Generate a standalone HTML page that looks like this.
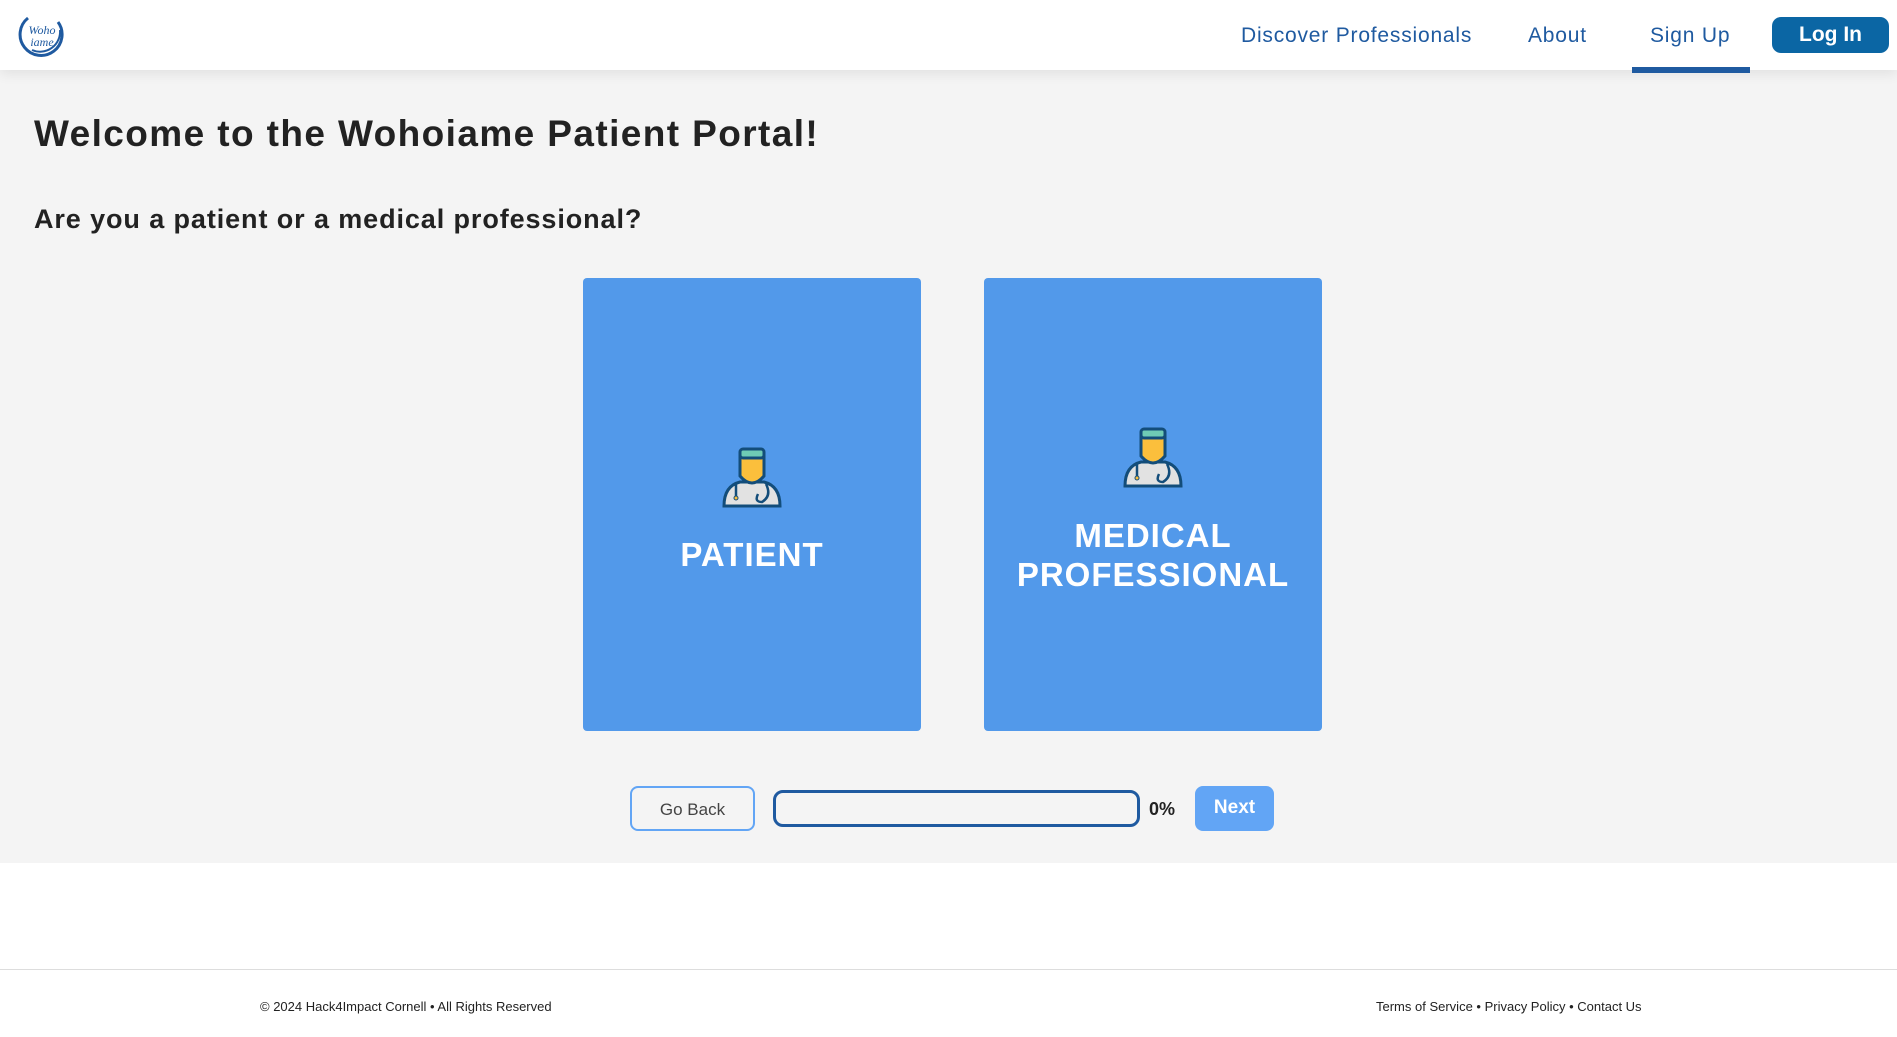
<!DOCTYPE html>
<html><head><meta charset="utf-8"><style>
*{box-sizing:border-box;margin:0;padding:0}
body{width:1897px;height:1037px;background:#fff;font-family:"Liberation Sans",sans-serif;position:relative;overflow:hidden}
.hdr{position:absolute;left:0;top:0;width:1897px;height:70px;background:#fff;box-shadow:0 4px 12px rgba(0,0,0,.08);z-index:2}
.nav{position:absolute;top:24px;font-size:21px;color:#1f5aa0;letter-spacing:0.8px}
.main{position:absolute;left:0;top:70px;width:1897px;height:793px;background:#f4f4f4}
h1{position:absolute;left:34px;top:113px;font-size:37px;color:#222;font-weight:bold;letter-spacing:1.4px}
h2{position:absolute;left:34px;top:204px;font-size:27px;color:#222;font-weight:bold;letter-spacing:0.9px}
.card{position:absolute;top:278px;width:338px;height:453px;background:#5299ea;border-radius:4px;color:#fff;text-align:center;font-weight:bold;font-size:33px;letter-spacing:1px}
.btn{position:absolute;top:786px;height:45px;border-radius:8px;font-size:17px;text-align:center;line-height:43px}
.foot{position:absolute;top:999px;font-size:13px;color:#222}
</style></head><body>
<div class="hdr">
<svg style="position:absolute;left:18px;top:10px" width="48" height="50" viewBox="0 0 48 50"><path d="M10 8 A21 21 0 1 0 40 12" fill="none" stroke="#1f5aa0" stroke-width="3"/><path d="M14 40 A20 20 0 0 0 42 20" fill="none" stroke="#1f5aa0" stroke-width="2"/><text x="24" y="24" font-size="12" fill="#1f5aa0" text-anchor="middle" font-style="italic" font-family="Liberation Serif,serif">Woho</text><text x="24" y="36" font-size="12" fill="#1f5aa0" text-anchor="middle" font-style="italic" font-family="Liberation Serif,serif">iame</text></svg>
<div class="nav" style="left:1241px">Discover Professionals</div>
<div class="nav" style="left:1528px">About</div>
<div class="nav" style="left:1650px">Sign Up</div>
<div style="position:absolute;left:1632px;top:67px;width:118px;height:6px;background:#1f5aa0"></div>
<div style="position:absolute;left:1772px;top:17px;width:117px;height:36px;background:#0b66a4;border-radius:9px;color:#fff;font-weight:bold;font-size:21px;text-align:center;line-height:36px">Log In</div>
</div>
<div class="main"></div>
<h1>Welcome to the Wohoiame Patient Portal!</h1>
<h2>Are you a patient or a medical professional?</h2>
<svg width="0" height="0" style="position:absolute"><defs><g id="doc"><path d="M4 60 Q4 40 20 36 L44 36 Q60 40 60 60 Z" fill="#e2e2e2" stroke="#134d7a" stroke-width="3"/><path d="M20 10 L44 10 L44 30 Q32 44 20 30 Z" fill="#fbbf3c" stroke="#134d7a" stroke-width="3"/><rect x="20" y="3" width="24" height="9" rx="3" fill="#6fcbb5" stroke="#134d7a" stroke-width="3"/><path d="M16 38 L16 52 M46 38 Q52 50 42 56 Q34 56 38 48" fill="none" stroke="#134d7a" stroke-width="2.5"/><circle cx="16" cy="52" r="2" fill="#fbbf3c" stroke="#134d7a"/></g></defs></svg>
<div class="card" style="left:583px"><svg style="position:absolute;left:137px;top:168px" width="64" height="64" viewBox="0 0 64 64"><use href="#doc"/></svg><div style="position:absolute;top:258px;width:100%">PATIENT</div></div>
<div class="card" style="left:984px"><svg style="position:absolute;left:137px;top:148px" width="64" height="64" viewBox="0 0 64 64"><use href="#doc"/></svg><div style="position:absolute;top:238px;width:100%;line-height:39px">MEDICAL<br>PROFESSIONAL</div></div>
<div class="btn" style="left:630px;width:125px;border:2px solid #62a5f5;color:#444">Go Back</div>
<div style="position:absolute;left:773px;top:790px;width:367px;height:37px;border:3px solid #1f5aa0;border-radius:10px"></div>
<div style="position:absolute;left:1149px;top:799px;font-size:18px;font-weight:bold;color:#222">0%</div>
<div class="btn" style="left:1195px;width:79px;background:#62a5f5;color:#fff;font-weight:bold;font-size:19px">Next</div>
<div style="position:absolute;left:0;top:969px;width:1897px;height:1px;background:#ddd"></div>
<div class="foot" style="left:260px">© 2024 Hack4Impact Cornell • All Rights Reserved</div>
<div class="foot" style="left:1376px">Terms of Service • Privacy Policy • Contact Us</div>
</body></html>
